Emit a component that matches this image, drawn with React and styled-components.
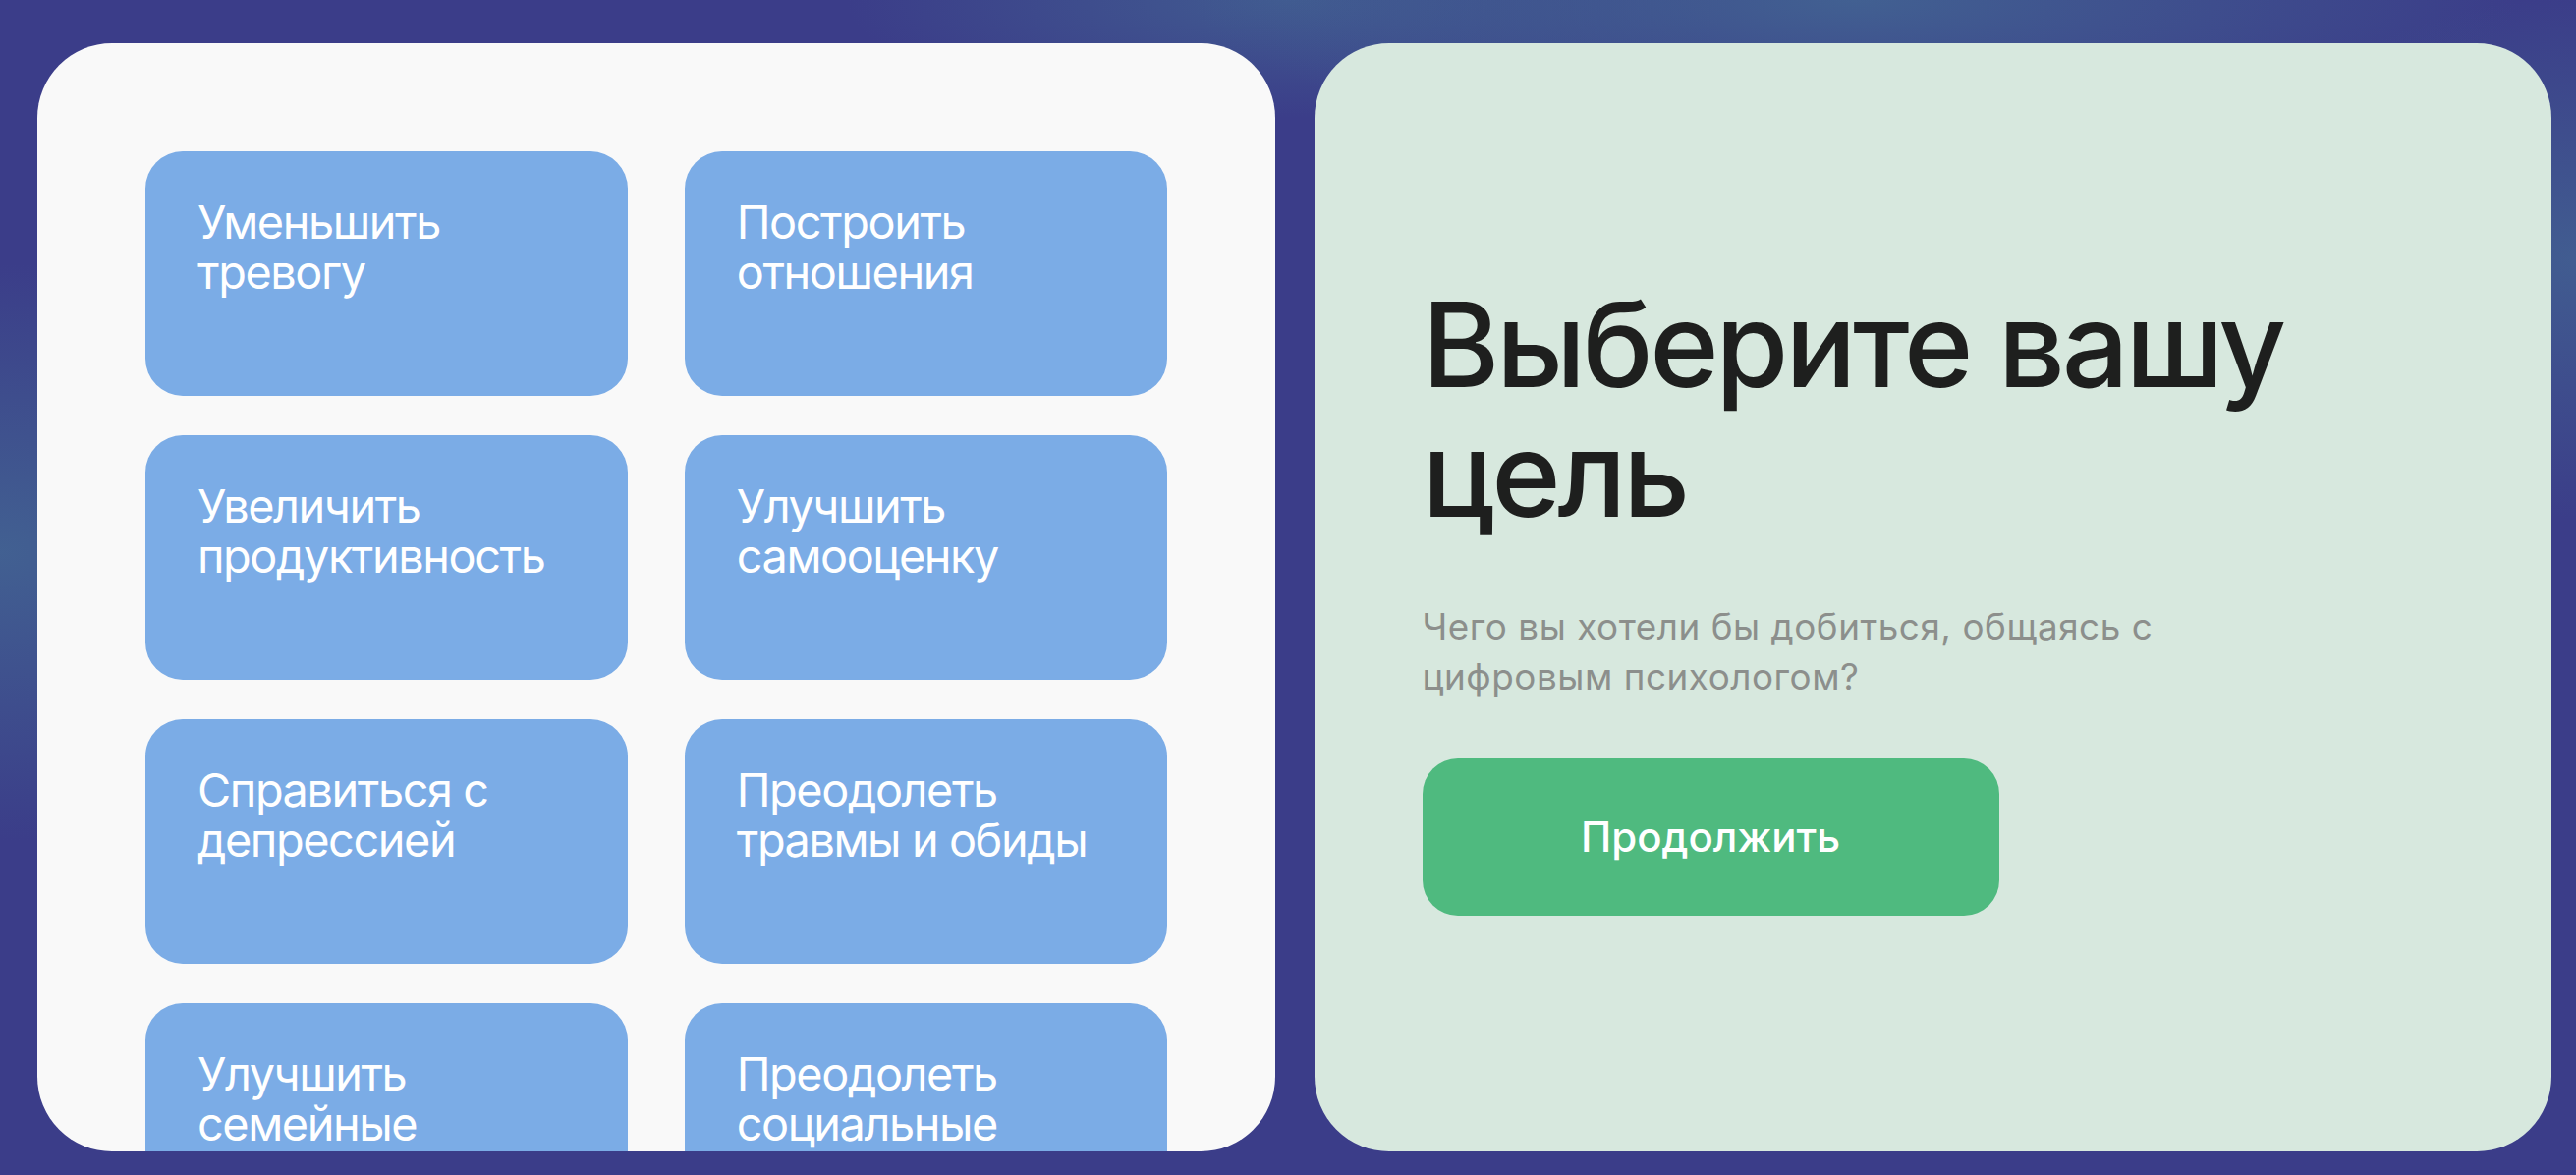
import React from 'react';
import styled, { createGlobalStyle } from 'styled-components';

const GlobalStyle = createGlobalStyle`
	html, body {
		margin: 0;
		padding: 0;
		height: 100%;
	}
	body {
		font-family: Inter, "Noto Sans", sans-serif;
		background: #3b3e89;
	}
	* {
		box-sizing: border-box;
	}
`;

const Page = styled.div`
	display: grid;
	grid-template-columns: repeat(2, minmax(0, 1fr));
	gap: 40px;
	height: 100vh;
	padding: 44px 25px 24px 38px;
	background:
		radial-gradient(ellipse 700px 420px at 0% 47%, rgba(66, 98, 146, 0.95), rgba(66, 98, 146, 0) 70%),
		radial-gradient(ellipse 520px 380px at 100% 22%, rgba(66, 98, 146, 0.85), rgba(66, 98, 146, 0) 70%),
		radial-gradient(ellipse 900px 200px at 72% 0%, rgba(66, 98, 146, 0.95), rgba(66, 98, 146, 0) 75%),
		radial-gradient(ellipse 600px 160px at 50% 0%, rgba(66, 98, 146, 0.8), rgba(66, 98, 146, 0) 75%),
		#3b3d89;
`;

const Panel = styled.section`
	min-width: 0;
	min-height: 0;
	border-radius: 76px;
	overflow: hidden;
	background-color: ${props => props.tint};
`;

const GoalsPanel = styled(Panel)`
	padding: 110px;
`;

const GoalsGrid = styled.div`
	display: grid;
	grid-template-columns: repeat(2, 1fr);
	grid-auto-rows: 249px;
	column-gap: 58px;
	row-gap: 40px;
`;

const GoalCard = styled.div`
	cursor: pointer;
	padding: 47px 53px;
	border-radius: 38px;
	background-color: #7bace6;
	color: #fff;
	font-size: 46.8px;
	font-weight: 400;
	line-height: 1.1;
	letter-spacing: -0.03em;
`;

const IntroPanel = styled(Panel)`
	display: flex;
	flex-direction: column;
	justify-content: center;
	align-items: flex-start;
	padding: 0 110px;
`;

const Title = styled.h1`
	margin: 0;
	font-size: 120px;
	line-height: 132px;
	font-weight: 500;
	letter-spacing: -0.028em;
	color: #1e1f1e;
	max-width: 960px;
`;

const Subtitle = styled.p`
	margin: 63px 0 0;
	max-width: 820px;
	font-size: 36.8px;
	line-height: 51.5px;
	font-weight: 400;
	letter-spacing: 0.015em;
	color: #8c8f8c;
`;

const ContinueButton = styled.button`
	margin-top: 57px;
	width: 587px;
	height: 160px;
	border: 0;
	border-radius: 36px;
	background-color: #4fba7f;
	color: #fff;
	font-family: Inter, "Noto Sans", sans-serif;
	font-size: 42px;
	font-weight: 500;
	cursor: pointer;
`;

const goals = [
	'Уменьшить тревогу',
	'Построить отношения',
	'Увеличить продуктивность',
	'Улучшить самооценку',
	'Справиться с депрессией',
	'Преодолеть травмы и обиды',
	'Улучшить семейные отношения',
	'Преодолеть социальные страхи',
];

const App = () => (
	<>
		<GlobalStyle />
		<Page>
			<GoalsPanel tint="#f9f9f9">
				<GoalsGrid>
					{goals.map((goal, index) => (
						<GoalCard key={`goal-${index}`}>{goal}</GoalCard>
					))}
				</GoalsGrid>
			</GoalsPanel>
			<IntroPanel tint="#d7e8de">
				<Title>Выберите вашу цель</Title>
				<Subtitle>Чего вы хотели бы добиться, общаясь с цифровым психологом?</Subtitle>
				<ContinueButton>Продолжить</ContinueButton>
			</IntroPanel>
		</Page>
	</>
);

export default App;
